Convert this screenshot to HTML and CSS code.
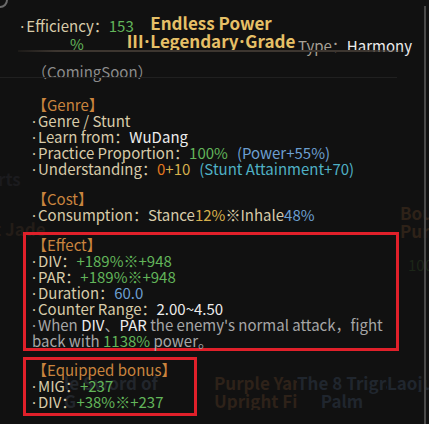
FILE: index.html
```html
<!doctype html>
<html lang="en">
  <head>
    <meta charset="UTF-8" />
    <title>Endless Power</title>
    <link rel="stylesheet" href="styles.css">
  </head>
  <body>
    <div class="tooltip">
      <!-- faint skill cards showing through the panel -->
      <div class="backdrop">
        <span class="ghost ghost-rts">rts</span>
        <span class="ghost ghost-jade">t Jade</span>
        <span class="ghost ghost-bou">Bou<br>Pur</span>
        <span class="ghost ghost-green">100</span>
        <span class="ghost ghost-sword">le Sword of<br>G</span>
        <span class="ghost ghost-purple">Purple Yang<br>Upright Fist</span>
        <span class="ghost ghost-trigram">The 8 Trigram<br>Palm</span>
        <span class="ghost ghost-laoju">Laojun</span>
      </div>
      <span class="corner-ring"></span>

      <div class="header">
        <div class="efficiency bullet">Efficiency：<span class="green">153<br>%</span></div>
        <div class="title">Endless Power<br>III<span class="dot">·</span>Legendary<span class="dot">·</span>Grade</div>
        <div class="type">Type：<span class="white">Harmony</span></div>
      </div>
      <div class="divider"></div>

      <div class="body">
        <p class="muted">（ComingSoon）</p>
        <p class="blank"></p>

        <p class="section-title">【Genre】</p>
        <p class="bullet">Genre / Stunt</p>
        <p class="bullet">Learn from：<span class="white">WuDang</span></p>
        <p class="bullet">Practice Proportion：<span class="green">100%</span><span class="gap"></span><span class="blue">(Power+55%)</span></p>
        <p class="bullet">Understanding：<span class="orange">0</span><span class="yellow">+10</span><span class="gap"></span><span class="cyan">(Stunt Attainment+70)</span></p>
        <p class="blank short"></p>

        <p class="section-title">【Cost】</p>
        <p class="bullet">Consumption：Stance<span class="yellow">12%</span>※Inhale<span class="blue">48%</span></p>

        <div class="marked effect">
          <p class="section-title">【Effect】</p>
          <p class="bullet">DIV：<span class="green">+189%※+948</span></p>
          <p class="bullet">PAR：<span class="green">+189%※+948</span></p>
          <p class="bullet">Duration：<span class="blue">60.0</span></p>
          <p class="bullet">Counter Range：<span class="white">2.00~4.50</span></p>
          <p class="bullet desc">When <span class="white">DIV</span>、<span class="white">PAR</span> the enemy's normal attack，fight</p>
          <p class="desc">back with <span class="green">1138%</span> power。</p>
        </div>

        <div class="marked bonus">
          <p class="section-title">【Equipped bonus】</p>
          <p class="bullet">MIG：<span class="green">+237</span></p>
          <p class="bullet">DIV：<span class="green">+38%※+237</span></p>
        </div>
      </div>
    </div>
  </body>
</html>
```

FILE: styles.css
```css
body {
  margin: 0;
  background-color: #111111;
  font-family: "Noto Sans CJK SC", "Noto Sans", sans-serif;
  font-size: 15px;
  line-height: 16px;
  color: #d8cba9;
}
p {
  margin: 0;
  height: 16px;
  white-space: nowrap;
}
.bullet::before,
.dot {
  font-family: "Noto Sans", sans-serif;
}
.bullet::before {
  content: "·";
  margin-right: 2px;
}
.dot {
  margin: 0 1px;
}
.gap {
  display: inline-block;
  width: 9px;
}
.tooltip {
  position: relative;
  width: 429px;
  height: 424px;
  overflow: hidden;
  background-color: #111111;
}
.tooltip::after {
  content: "";
  position: absolute;
  top: 6px;
  right: 3px;
  bottom: 0;
  width: 2px;
  background-color: #4a4a4a;
}
.corner-ring {
  position: absolute;
  top: -8px;
  left: -8px;
  width: 12px;
  height: 12px;
  border: 2px solid #6a6a6a;
  border-radius: 50%;
}
.header {
  position: relative;
  display: flex;
  align-items: flex-start;
  padding: 14px 0 0 18px;
  height: 34px;
}
.efficiency {
  width: 118px;
  margin-top: 3px;
  text-align: center;
  line-height: 17px;
}
.title {
  width: 180px;
  margin-left: -15px;
  text-align: center;
  font-weight: bold;
  font-size: 17px;
  line-height: 18px;
  color: #e6c067;
  white-space: nowrap;
}
.type {
  margin: 24px 0 0 -3px;
  color: #a8a096;
  white-space: nowrap;
}
.divider {
  position: relative;
  height: 2px;
  margin: 2px 24px 0 18px;
  background: linear-gradient(to right, rgba(70, 60, 50, 0.2), #3d3630 10%, #3d3630 90%, rgba(70, 60, 50, 0.2));
}
.body {
  position: relative;
  padding: 12px 0 0 32px;
}
.body::before {
  content: "";
  position: absolute;
  top: 25px;
  left: -32px;
  width: 429px;
  height: 1px;
  background-color: #202020;
}
.blank {
  height: 17px;
}
.blank.short {
  height: 14px;
}
.muted {
  color: #8c8c8c;
}
.section-title {
  color: #c9843e;
}
.marked {
  border: 3px solid #e0202a;
  margin-left: -9px;
  padding: 2px 0 0 6px;
}
.effect {
  width: 364px;
  height: 111px;
  margin-top: 9px;
}
.bonus {
  width: 162px;
  height: 51px;
  margin-top: 6px;
}
.desc {
  color: #a6a6a6;
}
.white { color: #ececec; }
.green { color: #62b55a; }
.blue { color: #6c9fd0; }
.cyan { color: #4fb0c4; }
.orange { color: #e5781e; }
.yellow { color: #d6b04c; }

.backdrop {
  position: absolute;
  inset: 0;
  font-weight: bold;
  font-size: 17px;
  line-height: 18px;
}
.ghost {
  position: absolute;
  overflow: hidden;
  white-space: nowrap;
}
.ghost-rts { left: -2px; top: 170px; color: #1b1b1e; }
.ghost-jade { left: -6px; top: 220px; color: #241d18; }
.ghost-bou { left: 400px; top: 204px; color: #2e2218; }
.ghost-green { left: 408px; top: 256px; color: #1c2618; font-weight: normal; font-size: 15px; }
.ghost-sword { left: 64px; top: 374px; width: 120px; color: #22262c; }
.ghost-purple { left: 214px; top: 374px; width: 83px; color: #2e2219; }
.ghost-trigram { left: 297px; top: 374px; width: 90px; color: #20262e; text-align: center; }
.ghost-laoju { left: 387px; top: 374px; width: 42px; color: #20262e; }
```
